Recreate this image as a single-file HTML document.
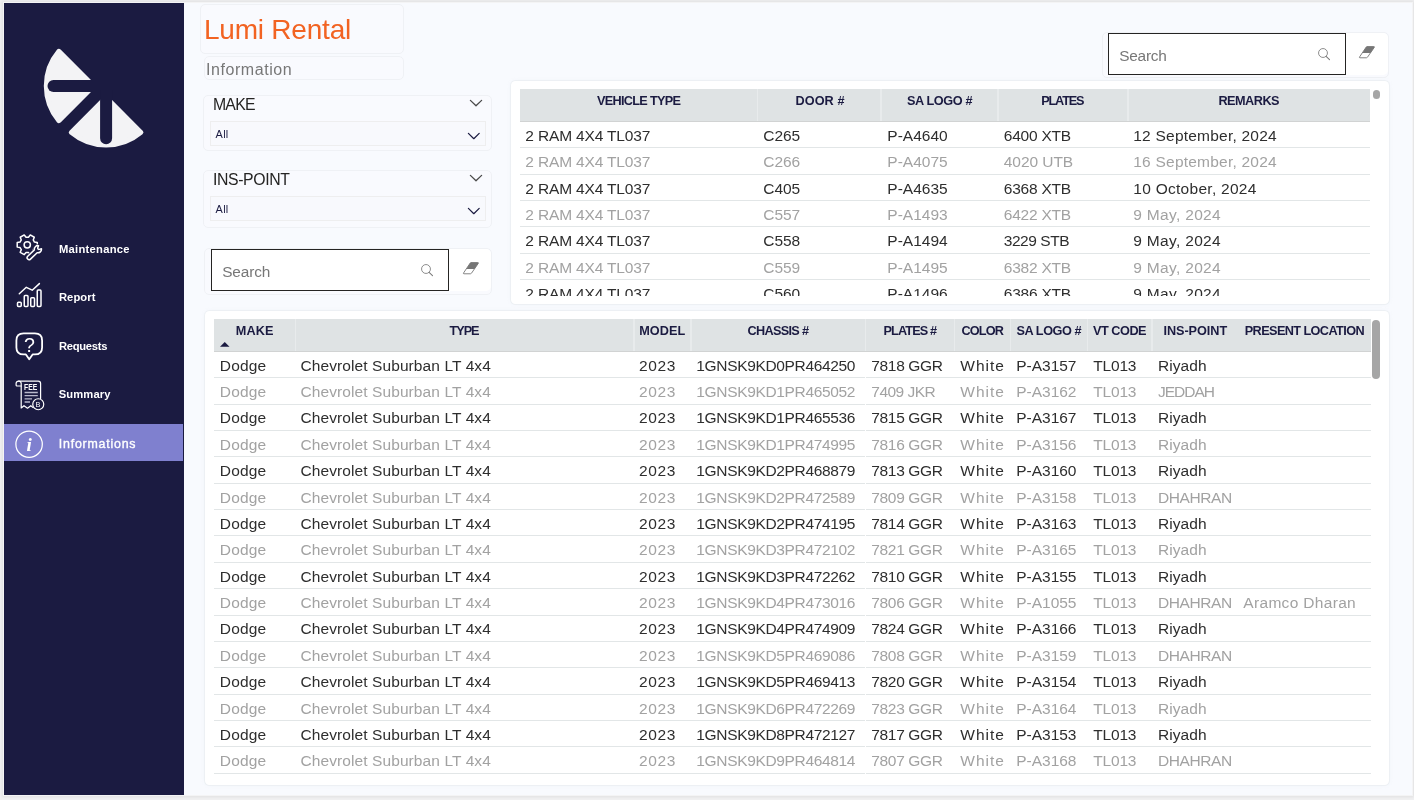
<!DOCTYPE html>
<html lang="en"><head><meta charset="utf-8"><title>Lumi Rental - Information</title>
<style>
*{box-sizing:border-box;margin:0;padding:0}
html,body{width:1414px;height:800px;overflow:hidden}
body{position:relative;background:#f0f0f1;font-family:"Liberation Sans",Arial,sans-serif;color:#252423}
h1,h2{font-weight:400;font-size:inherit}
.abs{position:absolute}
#shadow{display:none}
#canvas{position:absolute;left:4px;top:3px;width:1408px;height:792px;background:#f8fafe;overflow:hidden;will-change:transform;box-shadow:0 0 0 1px #f4f4f5,0 0 3px 2px rgba(0,0,0,.065)}
#side{position:absolute;left:0;top:0;width:180.3px;height:792px;background:#1b1b41;color:#fff}
#side svg{position:absolute;overflow:visible}
.nav{position:absolute;left:0;width:180.3px}
.nav.on{background:#7f80cf}
.card{position:absolute;border:1px solid #eff1f5;border-radius:5px;background:#f9fafe}
.wcard{position:absolute;border-radius:4.5px;background:#fff;box-shadow:0 0 0 1px rgba(228,233,236,.45),0 0 4px rgba(215,220,230,.22)}
.t{position:absolute;white-space:nowrap}
.dd{position:absolute;border:1.5px solid #eeeeef;background:#f8f9fd}
.sbox{position:absolute;border:1.3px solid #252423;background:#fff}
.hdr{position:absolute;background:#dfe3e4;border-bottom:1.5px solid #d1d3d3}
.sep{position:absolute;top:0;width:1.2px;background:#e8ebec}
.row{position:absolute;left:0;border-bottom:1.2px solid #e2e6e7}
.clip{position:absolute;overflow:hidden}
</style></head>
<body>
<div id="shadow"></div>
<div id="canvas">
<nav id="side">
<svg style="left:26px;top:32px" width="130" height="130" viewBox="30 35 130 130">
<g fill="#f3f3f5" stroke="#f3f3f5" stroke-width="5" stroke-linejoin="round">
<path d="M93.46 86 L58.85 51.39 A54 54 0 0 0 58.85 120.61 Z"/>
<path d="M106.1 97.64 L71.33 132.41 A54 54 0 0 0 140.87 132.41 Z"/>
</g>
<g fill="#1b1b41">
<path d="M53.5 80 H99 V92 H53.5 A6 6 0 0 1 53.5 80 Z"/>
<path d="M100.1 90 H112.1 V138.2 A6 6 0 0 1 100.1 138.2 Z"/>
</g>
</svg>
<div class="nav on" style="top:420.6px;height:37.4px;width:179px"></div>
<svg style="left:0;top:0" width="181" height="792" viewBox="4 3 181 792" fill="none" stroke="#fff" stroke-width="1.35" stroke-linecap="round" stroke-linejoin="round">
<path d="M34.44 242.04 L37.29 242.48 L37.29 247.12 L34.44 247.56 L33.23 249.65 L34.27 252.33 L30.26 254.65 L28.45 252.41 L26.05 252.41 L24.24 254.65 L20.23 252.33 L21.27 249.65 L20.06 247.56 L17.21 247.12 L17.21 242.48 L20.06 242.04 L21.27 239.95 L20.23 237.27 L24.24 234.95 L26.05 237.19 L28.45 237.19 L30.26 234.95 L34.27 237.27 L33.23 239.95Z" stroke-width="1.5"/>
<circle cx="27.25" cy="244.8" r="3.15" stroke-width="1.5"/>
<g transform="translate(37.9 249.2) rotate(-44)"><path fill="#1b1b41" stroke="#1b1b41" stroke-width="2.8" d="M-3 -2 H-12.2 A2 2 0 0 0 -12.2 2 H-3 A3.6 3.6 0 0 0 2.9 2.1 L0.9 1.1 A1.3 1.3 0 0 1 0.9 -1.1 L2.9 -2.1 A3.6 3.6 0 0 0 -3 -2Z"/><path fill="#1b1b41" stroke-width="1.5" d="M-3 -2 H-12.2 A2 2 0 0 0 -12.2 2 H-3 A3.6 3.6 0 0 0 2.9 2.1 L0.9 1.1 A1.3 1.3 0 0 1 0.9 -1.1 L2.9 -2.1 A3.6 3.6 0 0 0 -3 -2Z"/></g>
<g stroke-width="1.5">
<path d="M19.3 293.7 L26.3 287.3 L32.2 290.2 L39.4 283.6"/>
<rect x="17.5" y="302.25" width="3.75" height="4.25" rx="0.9"/>
<rect x="24.25" y="295.5" width="3.75" height="11" rx="0.9"/>
<rect x="30.75" y="297.75" width="3.75" height="8.75" rx="0.9"/>
<rect x="37.25" y="290" width="3.75" height="16.5" rx="0.9"/>
</g>
<path stroke-width="1.8" d="M23.6 333.4 H34.9 C40 333.4 42.1 335.6 42.1 340.4 V347.4 C42.1 352.2 40 354.4 34.9 354.4 H32.6 L29.25 359.3 L25.9 354.4 H23.6 C18.5 354.4 16.4 352.2 16.4 347.4 V340.4 C16.4 335.6 18.5 333.4 23.6 333.4Z"/>
<g stroke-width="1.2">
<path d="M21.2 386 H17.2 A1 1 0 0 1 16.1 385 V383.6 A2.55 2.55 0 0 1 18.65 381.05 H38.2 A2.4 2.4 0 0 1 40.6 383.45 V398.6"/>
<path d="M18.65 381.05 A2.55 2.55 0 0 1 21.2 383.6 V408 L24 405.7 L27.5 408.2 L30.75 405.7 L32.8 407.4"/>
<path d="M24.6 392.5 H37.8 M24.6 395.6 H37.8 M24.6 398.8 H32 M24.6 402 H30" stroke="#b9b9cc" stroke-width="1.3" stroke-linecap="butt"/>
<circle cx="38.25" cy="404.25" r="5.5" fill="#1b1b41"/>
</g>
<circle cx="29.1" cy="444.2" r="13.2" stroke-width="1.25"/>
</svg>
<span class="t" style="left:20.00px;top:331.20px;font-size:19.6px;line-height:22px;color:#fff;">?</span>
<span class="t" style="left:20.10px;top:378.60px;font-size:8.5px;line-height:10px;font-weight:700;color:#fff;transform:scaleX(.8);transform-origin:0 0;">FEE</span>
<span class="t" style="left:31.50px;top:397.00px;font-size:7.3px;line-height:9px;color:#fff;">B</span>
<span class="t" style="left:22.60px;top:430.60px;font-size:19px;line-height:21px;font-weight:700;color:#fff;font-style:italic;font-family:&quot;Liberation Serif&quot;,serif;">i</span>
<span class="t" style="left:54.90px;top:239.80px;font-size:11.2px;line-height:12px;font-weight:700;letter-spacing:0.284px;color:#fff;">Maintenance</span>
<span class="t" style="left:54.90px;top:288.00px;font-size:11.2px;line-height:12px;font-weight:700;letter-spacing:0.112px;color:#fff;">Report</span>
<span class="t" style="left:54.90px;top:337.00px;font-size:11.2px;line-height:12px;font-weight:700;letter-spacing:-0.250px;color:#fff;">Requests</span>
<span class="t" style="left:54.70px;top:384.80px;font-size:11.2px;line-height:12px;font-weight:700;letter-spacing:0.137px;color:#fff;">Summary</span>
<span class="t" style="left:54.84px;top:434.00px;font-size:12.4px;line-height:14px;letter-spacing:0.776px;color:#fff;-webkit-text-stroke:0.35px #fff;">Informations</span>
</nav>
<main>
<h1 class="card" style="left:196.00px;top:0.50px;width:204.00px;height:50.90px;"><span class="t" style="left:2.94px;top:9.50px;font-size:28px;line-height:31px;letter-spacing:-0.209px;color:#f26322;">Lumi Rental</span></h1>
<h2 class="card" style="left:199.50px;top:52.50px;width:200.50px;height:24.00px;"><span class="t" style="left:1.38px;top:4.50px;font-size:16px;line-height:17px;letter-spacing:0.580px;color:#777;">Information</span></h2>
<div class="card" style="left:199.40px;top:92.40px;width:288.90px;height:55.80px;"><span class="t" style="left:8.49px;top:-0.40px;font-size:15.8px;line-height:17px;letter-spacing:-0.715px;color:#252423;">MAKE</span></div>
<svg class="abs" style="left:465.00px;top:95.70px;overflow:visible" width="14.00" height="8.30" viewBox="-1 -1 14.00 8.30"><path d="M0.4 0.4 L6.00 5.80 L11.60 0.4" fill="none" stroke="#4a4a4a" stroke-width="1.3" stroke-linecap="round" stroke-linejoin="round"/></svg>
<div class="dd" style="left:205.60px;top:118.30px;width:276.60px;height:25.20px;"><span class="t" style="left:5.01px;top:6.10px;font-size:10.9px;line-height:12px;letter-spacing:0.289px;color:#1b1b41;">All</span></div>
<svg class="abs" style="left:462.80px;top:129.00px;overflow:visible" width="13.60" height="8.20" viewBox="-1 -1 13.60 8.20"><path d="M0.4 0.4 L5.80 5.70 L11.20 0.4" fill="none" stroke="#1b1b41" stroke-width="1.25" stroke-linecap="round" stroke-linejoin="round"/></svg>
<div class="card" style="left:199.40px;top:167.40px;width:288.90px;height:57.40px;"><span class="t" style="left:8.49px;top:-0.40px;font-size:15.8px;line-height:17px;letter-spacing:-0.355px;color:#252423;">INS-POINT</span></div>
<svg class="abs" style="left:465.00px;top:170.70px;overflow:visible" width="14.00" height="8.30" viewBox="-1 -1 14.00 8.30"><path d="M0.4 0.4 L6.00 5.80 L11.60 0.4" fill="none" stroke="#4a4a4a" stroke-width="1.3" stroke-linecap="round" stroke-linejoin="round"/></svg>
<div class="dd" style="left:205.60px;top:193.30px;width:276.60px;height:25.20px;"><span class="t" style="left:5.01px;top:6.10px;font-size:10.9px;line-height:12px;letter-spacing:0.289px;color:#1b1b41;">All</span></div>
<svg class="abs" style="left:462.80px;top:204.00px;overflow:visible" width="13.60" height="8.20" viewBox="-1 -1 13.60 8.20"><path d="M0.4 0.4 L5.80 5.70 L11.20 0.4" fill="none" stroke="#1b1b41" stroke-width="1.25" stroke-linecap="round" stroke-linejoin="round"/></svg>
<div class="card" style="left:200.00px;top:245.00px;width:288.20px;height:46.90px;"></div>
<div class="abs" style="left:209.00px;top:246.00px;width:278.30px;height:41.90px;background:#fff;border-radius:0 5px 5px 0;"></div>
<div class="sbox" style="left:207.00px;top:246.00px;width:238.20px;height:41.90px;"><span class="t" style="left:10.21px;top:12.70px;font-size:15.4px;line-height:17px;letter-spacing:-0.116px;color:#777;">Search</span></div>
<svg class="abs" style="left:416.30px;top:260.40px;overflow:visible" width="14" height="14" viewBox="-6 -6 14 14"><circle cx="0" cy="0" r="4.45" fill="none" stroke="#7a7a7a" stroke-width="0.85"/><path d="M3.1 3.3 L6.5 6.6" stroke="#7a7a7a" stroke-width="1.05" stroke-linecap="round"/></svg>
<svg class="abs" style="left:458.60px;top:259.10px;overflow:visible" width="16" height="12.4" viewBox="0 0 16 12.4"><path d="M8 0.6 H14.8 Q15.8 0.6 15.2 1.5 L8.5 11.2 Q8.1 11.8 7.4 11.8 H1 Q0 11.8 0.6 10.9 L7.2 1.1 Q7.5 0.6 8 0.6Z" fill="#fff" stroke="#767676" stroke-width="0.9" stroke-linejoin="round"/><path d="M8 0.6 H14.8 Q15.8 0.6 15.2 1.5 L11.5 6.9 H3.3 L7.2 1.1 Q7.5 0.6 8 0.6Z" fill="#767676"/></svg>
<div class="card" style="left:1097.50px;top:29.00px;width:287.00px;height:46.00px;"></div>
<div class="abs" style="left:1106.00px;top:29.90px;width:277.60px;height:41.90px;background:#fff;border-radius:0 5px 5px 0;"></div>
<div class="sbox" style="left:1104.00px;top:29.90px;width:238.30px;height:41.90px;"><span class="t" style="left:10.21px;top:12.80px;font-size:15.4px;line-height:17px;letter-spacing:-0.216px;color:#777;">Search</span></div>
<svg class="abs" style="left:1313.30px;top:44.30px;overflow:visible" width="14" height="14" viewBox="-6 -6 14 14"><circle cx="0" cy="0" r="4.45" fill="none" stroke="#7a7a7a" stroke-width="0.85"/><path d="M3.1 3.3 L6.5 6.6" stroke="#7a7a7a" stroke-width="1.05" stroke-linecap="round"/></svg>
<svg class="abs" style="left:1355.10px;top:43.20px;overflow:visible" width="16" height="12.4" viewBox="0 0 16 12.4"><path d="M8 0.6 H14.8 Q15.8 0.6 15.2 1.5 L8.5 11.2 Q8.1 11.8 7.4 11.8 H1 Q0 11.8 0.6 10.9 L7.2 1.1 Q7.5 0.6 8 0.6Z" fill="#fff" stroke="#767676" stroke-width="0.9" stroke-linejoin="round"/><path d="M8 0.6 H14.8 Q15.8 0.6 15.2 1.5 L11.5 6.9 H3.3 L7.2 1.1 Q7.5 0.6 8 0.6Z" fill="#767676"/></svg>
<section class="wcard" style="left:506.70px;top:77.70px;width:878.30px;height:223.30px">
<div class="hdr" style="left:9.30px;top:8.20px;width:850.40px;height:32.95px">
<i class="sep" style="left:236.90px;height:32.35px"></i>
<i class="sep" style="left:360.40px;height:32.35px"></i>
<i class="sep" style="left:477.40px;height:32.35px"></i>
<i class="sep" style="left:607.40px;height:32.35px"></i>
<span class="t" style="left:76.93px;top:5.10px;font-size:12.7px;line-height:14px;font-weight:700;letter-spacing:-0.682px;color:#1b1b41;">VEHICLE TYPE</span>
<span class="t" style="left:275.43px;top:5.10px;font-size:12.7px;line-height:14px;font-weight:700;letter-spacing:0.100px;color:#1b1b41;">DOOR #</span>
<span class="t" style="left:386.93px;top:5.10px;font-size:12.7px;line-height:14px;font-weight:700;letter-spacing:-0.368px;color:#1b1b41;">SA LOGO #</span>
<span class="t" style="left:521.23px;top:5.10px;font-size:12.7px;line-height:14px;font-weight:700;letter-spacing:-1.153px;color:#1b1b41;">PLATES</span>
<span class="t" style="left:698.43px;top:5.10px;font-size:12.7px;line-height:14px;font-weight:700;letter-spacing:-0.500px;color:#1b1b41;">REMARKS</span>
</div>
<div class="clip" style="left:9.30px;top:41.15px;width:850.40px;height:174.05px">
<div class="row" style="top:-0.60px;width:850.40px;height:26.960px;color:#2e2e2e">
<span class="t" style="left:5.30px;top:5.60px;font-size:15.5px;line-height:17px;letter-spacing:-0.151px">2 RAM 4X4 TL037</span>
<span class="t" style="left:243.30px;top:5.60px;font-size:15.5px;line-height:17px;letter-spacing:-0.053px">C265</span>
<span class="t" style="left:367.30px;top:5.60px;font-size:15.5px;line-height:17px;letter-spacing:0.013px">P-A4640</span>
<span class="t" style="left:483.80px;top:5.60px;font-size:15.5px;line-height:17px;letter-spacing:-0.220px">6400 XTB</span>
<span class="t" style="left:613.30px;top:5.60px;font-size:15.5px;line-height:17px;letter-spacing:0.223px">12 September, 2024</span>
</div>
<div class="row" style="top:25.76px;width:850.40px;height:26.960px;color:#a2a2a2">
<span class="t" style="left:5.30px;top:5.60px;font-size:15.5px;line-height:17px;letter-spacing:-0.151px">2 RAM 4X4 TL037</span>
<span class="t" style="left:243.30px;top:5.60px;font-size:15.5px;line-height:17px;letter-spacing:-0.053px">C266</span>
<span class="t" style="left:367.30px;top:5.60px;font-size:15.5px;line-height:17px;letter-spacing:0.013px">P-A4075</span>
<span class="t" style="left:483.80px;top:5.60px;font-size:15.5px;line-height:17px;letter-spacing:-0.056px">4020 UTB</span>
<span class="t" style="left:613.30px;top:5.60px;font-size:15.5px;line-height:17px;letter-spacing:0.223px">16 September, 2024</span>
</div>
<div class="row" style="top:52.12px;width:850.40px;height:26.960px;color:#2e2e2e">
<span class="t" style="left:5.30px;top:5.60px;font-size:15.5px;line-height:17px;letter-spacing:-0.151px">2 RAM 4X4 TL037</span>
<span class="t" style="left:243.30px;top:5.60px;font-size:15.5px;line-height:17px;letter-spacing:-0.053px">C405</span>
<span class="t" style="left:367.30px;top:5.60px;font-size:15.5px;line-height:17px;letter-spacing:0.013px">P-A4635</span>
<span class="t" style="left:483.80px;top:5.60px;font-size:15.5px;line-height:17px;letter-spacing:-0.220px">6368 XTB</span>
<span class="t" style="left:613.30px;top:5.60px;font-size:15.5px;line-height:17px;letter-spacing:0.278px">10 October, 2024</span>
</div>
<div class="row" style="top:78.48px;width:850.40px;height:26.960px;color:#a2a2a2">
<span class="t" style="left:5.30px;top:5.60px;font-size:15.5px;line-height:17px;letter-spacing:-0.151px">2 RAM 4X4 TL037</span>
<span class="t" style="left:243.30px;top:5.60px;font-size:15.5px;line-height:17px;letter-spacing:-0.053px">C557</span>
<span class="t" style="left:367.30px;top:5.60px;font-size:15.5px;line-height:17px;letter-spacing:0.013px">P-A1493</span>
<span class="t" style="left:483.80px;top:5.60px;font-size:15.5px;line-height:17px;letter-spacing:-0.220px">6422 XTB</span>
<span class="t" style="left:613.30px;top:5.60px;font-size:15.5px;line-height:17px;letter-spacing:0.324px">9 May, 2024</span>
</div>
<div class="row" style="top:104.84px;width:850.40px;height:26.960px;color:#2e2e2e">
<span class="t" style="left:5.30px;top:5.60px;font-size:15.5px;line-height:17px;letter-spacing:-0.151px">2 RAM 4X4 TL037</span>
<span class="t" style="left:243.30px;top:5.60px;font-size:15.5px;line-height:17px;letter-spacing:-0.053px">C558</span>
<span class="t" style="left:367.30px;top:5.60px;font-size:15.5px;line-height:17px;letter-spacing:0.013px">P-A1494</span>
<span class="t" style="left:483.80px;top:5.60px;font-size:15.5px;line-height:17px;letter-spacing:-0.463px">3229 STB</span>
<span class="t" style="left:613.30px;top:5.60px;font-size:15.5px;line-height:17px;letter-spacing:0.324px">9 May, 2024</span>
</div>
<div class="row" style="top:131.20px;width:850.40px;height:26.960px;color:#a2a2a2">
<span class="t" style="left:5.30px;top:5.60px;font-size:15.5px;line-height:17px;letter-spacing:-0.151px">2 RAM 4X4 TL037</span>
<span class="t" style="left:243.30px;top:5.60px;font-size:15.5px;line-height:17px;letter-spacing:-0.053px">C559</span>
<span class="t" style="left:367.30px;top:5.60px;font-size:15.5px;line-height:17px;letter-spacing:0.013px">P-A1495</span>
<span class="t" style="left:483.80px;top:5.60px;font-size:15.5px;line-height:17px;letter-spacing:-0.220px">6382 XTB</span>
<span class="t" style="left:613.30px;top:5.60px;font-size:15.5px;line-height:17px;letter-spacing:0.324px">9 May, 2024</span>
</div>
<div class="row" style="top:157.56px;width:850.40px;height:26.960px;color:#2e2e2e">
<span class="t" style="left:5.30px;top:5.60px;font-size:15.5px;line-height:17px;letter-spacing:-0.151px">2 RAM 4X4 TL037</span>
<span class="t" style="left:243.30px;top:5.60px;font-size:15.5px;line-height:17px;letter-spacing:-0.053px">C560</span>
<span class="t" style="left:367.30px;top:5.60px;font-size:15.5px;line-height:17px;letter-spacing:0.013px">P-A1496</span>
<span class="t" style="left:483.80px;top:5.60px;font-size:15.5px;line-height:17px;letter-spacing:-0.220px">6386 XTB</span>
<span class="t" style="left:613.30px;top:5.60px;font-size:15.5px;line-height:17px;letter-spacing:0.324px">9 May, 2024</span>
</div>
</div>
<div class="abs" style="left:862.00px;top:9.70px;width:7.50px;height:8.30px;border-radius:4px;background:#a6a6a6"></div>
</section>
<section class="wcard" style="left:201.00px;top:308.00px;width:1184.00px;height:474.00px">
<div class="hdr" style="left:9.00px;top:7.75px;width:1156.60px;height:33.10px">
<i class="sep" style="left:81.10px;height:32.50px"></i>
<i class="sep" style="left:419.40px;height:32.50px"></i>
<i class="sep" style="left:476.40px;height:32.50px"></i>
<i class="sep" style="left:650.65px;height:32.50px"></i>
<i class="sep" style="left:739.90px;height:32.50px"></i>
<i class="sep" style="left:795.65px;height:32.50px"></i>
<i class="sep" style="left:872.65px;height:32.50px"></i>
<i class="sep" style="left:937.40px;height:32.50px"></i>
<span class="t" style="left:21.73px;top:5.25px;font-size:12.7px;line-height:14px;font-weight:700;letter-spacing:0.162px;color:#1b1b41;">MAKE</span>
<span class="t" style="left:235.43px;top:5.25px;font-size:12.7px;line-height:14px;font-weight:700;letter-spacing:-0.998px;color:#1b1b41;">TYPE</span>
<span class="t" style="left:425.23px;top:5.25px;font-size:12.7px;line-height:14px;font-weight:700;letter-spacing:0.083px;color:#1b1b41;">MODEL</span>
<span class="t" style="left:533.43px;top:5.25px;font-size:12.7px;line-height:14px;font-weight:700;letter-spacing:-0.667px;color:#1b1b41;">CHASSIS #</span>
<span class="t" style="left:669.43px;top:5.25px;font-size:12.7px;line-height:14px;font-weight:700;letter-spacing:-0.864px;color:#1b1b41;">PLATES #</span>
<span class="t" style="left:747.43px;top:5.25px;font-size:12.7px;line-height:14px;font-weight:700;letter-spacing:-0.842px;color:#1b1b41;">COLOR</span>
<span class="t" style="left:802.43px;top:5.25px;font-size:12.7px;line-height:14px;font-weight:700;letter-spacing:-0.431px;color:#1b1b41;">SA LOGO #</span>
<span class="t" style="left:878.93px;top:5.25px;font-size:12.7px;line-height:14px;font-weight:700;letter-spacing:-0.458px;color:#1b1b41;">VT CODE</span>
<span class="t" style="left:949.43px;top:5.25px;font-size:12.7px;line-height:14px;font-weight:700;letter-spacing:-0.050px;color:#1b1b41;">INS-POINT</span>
<span class="t" style="left:1030.73px;top:5.25px;font-size:12.7px;line-height:14px;font-weight:700;letter-spacing:-0.594px;color:#1b1b41;">PRESENT LOCATION</span>
<svg class="abs" style="left:6.00px;top:23.05px" width="9.50" height="4.80" viewBox="0 0 10 5"><path d="M0 5 L5 0 L10 5Z" fill="#1b1b41"/></svg>
</div>
<div class="clip" style="left:9.00px;top:40.85px;width:1156.60px;height:428.15px">
<div class="row" style="top:-0.60px;width:1156.60px;height:26.975px;color:#2e2e2e">
<span class="t" style="left:5.80px;top:5.45px;font-size:15.5px;line-height:17px;letter-spacing:0.180px">Dodge</span>
<span class="t" style="left:86.50px;top:5.45px;font-size:15.5px;line-height:17px;letter-spacing:0.091px">Chevrolet Suburban LT 4x4</span>
<span class="t" style="left:425.10px;top:5.45px;font-size:15.5px;line-height:17px;letter-spacing:0.638px">2023</span>
<span class="t" style="left:482.30px;top:5.45px;font-size:15.5px;line-height:17px;letter-spacing:-0.336px">1GNSK9KD0PR464250</span>
<span class="t" style="left:657.30px;top:5.45px;font-size:15.5px;line-height:17px;letter-spacing:-0.343px">7818 GGR</span>
<span class="t" style="left:746.30px;top:5.45px;font-size:15.5px;line-height:17px;letter-spacing:1.019px">White</span>
<span class="t" style="left:802.30px;top:5.45px;font-size:15.5px;line-height:17px;letter-spacing:-0.021px">P-A3157</span>
<span class="t" style="left:879.30px;top:5.45px;font-size:15.5px;line-height:17px;letter-spacing:-0.189px">TL013</span>
<span class="t" style="left:943.90px;top:5.45px;font-size:15.5px;line-height:17px;letter-spacing:0.109px">Riyadh</span>
</div>
<div class="row" style="top:25.77px;width:1156.60px;height:26.975px;color:#a2a2a2">
<span class="t" style="left:5.80px;top:5.45px;font-size:15.5px;line-height:17px;letter-spacing:0.180px">Dodge</span>
<span class="t" style="left:86.50px;top:5.45px;font-size:15.5px;line-height:17px;letter-spacing:0.091px">Chevrolet Suburban LT 4x4</span>
<span class="t" style="left:425.10px;top:5.45px;font-size:15.5px;line-height:17px;letter-spacing:0.638px">2023</span>
<span class="t" style="left:482.30px;top:5.45px;font-size:15.5px;line-height:17px;letter-spacing:-0.336px">1GNSK9KD1PR465052</span>
<span class="t" style="left:657.30px;top:5.45px;font-size:15.5px;line-height:17px;letter-spacing:-0.525px">7409 JKR</span>
<span class="t" style="left:746.30px;top:5.45px;font-size:15.5px;line-height:17px;letter-spacing:1.019px">White</span>
<span class="t" style="left:802.30px;top:5.45px;font-size:15.5px;line-height:17px;letter-spacing:-0.021px">P-A3162</span>
<span class="t" style="left:879.30px;top:5.45px;font-size:15.5px;line-height:17px;letter-spacing:-0.189px">TL013</span>
<span class="t" style="left:943.90px;top:5.45px;font-size:15.5px;line-height:17px;letter-spacing:-0.983px">JEDDAH</span>
</div>
<div class="row" style="top:52.15px;width:1156.60px;height:26.975px;color:#2e2e2e">
<span class="t" style="left:5.80px;top:5.45px;font-size:15.5px;line-height:17px;letter-spacing:0.180px">Dodge</span>
<span class="t" style="left:86.50px;top:5.45px;font-size:15.5px;line-height:17px;letter-spacing:0.091px">Chevrolet Suburban LT 4x4</span>
<span class="t" style="left:425.10px;top:5.45px;font-size:15.5px;line-height:17px;letter-spacing:0.638px">2023</span>
<span class="t" style="left:482.30px;top:5.45px;font-size:15.5px;line-height:17px;letter-spacing:-0.336px">1GNSK9KD1PR465536</span>
<span class="t" style="left:657.30px;top:5.45px;font-size:15.5px;line-height:17px;letter-spacing:-0.343px">7815 GGR</span>
<span class="t" style="left:746.30px;top:5.45px;font-size:15.5px;line-height:17px;letter-spacing:1.019px">White</span>
<span class="t" style="left:802.30px;top:5.45px;font-size:15.5px;line-height:17px;letter-spacing:-0.021px">P-A3167</span>
<span class="t" style="left:879.30px;top:5.45px;font-size:15.5px;line-height:17px;letter-spacing:-0.189px">TL013</span>
<span class="t" style="left:943.90px;top:5.45px;font-size:15.5px;line-height:17px;letter-spacing:0.109px">Riyadh</span>
</div>
<div class="row" style="top:78.52px;width:1156.60px;height:26.975px;color:#a2a2a2">
<span class="t" style="left:5.80px;top:5.45px;font-size:15.5px;line-height:17px;letter-spacing:0.180px">Dodge</span>
<span class="t" style="left:86.50px;top:5.45px;font-size:15.5px;line-height:17px;letter-spacing:0.091px">Chevrolet Suburban LT 4x4</span>
<span class="t" style="left:425.10px;top:5.45px;font-size:15.5px;line-height:17px;letter-spacing:0.638px">2023</span>
<span class="t" style="left:482.30px;top:5.45px;font-size:15.5px;line-height:17px;letter-spacing:-0.336px">1GNSK9KD1PR474995</span>
<span class="t" style="left:657.30px;top:5.45px;font-size:15.5px;line-height:17px;letter-spacing:-0.343px">7816 GGR</span>
<span class="t" style="left:746.30px;top:5.45px;font-size:15.5px;line-height:17px;letter-spacing:1.019px">White</span>
<span class="t" style="left:802.30px;top:5.45px;font-size:15.5px;line-height:17px;letter-spacing:-0.021px">P-A3156</span>
<span class="t" style="left:879.30px;top:5.45px;font-size:15.5px;line-height:17px;letter-spacing:-0.189px">TL013</span>
<span class="t" style="left:943.90px;top:5.45px;font-size:15.5px;line-height:17px;letter-spacing:0.109px">Riyadh</span>
</div>
<div class="row" style="top:104.90px;width:1156.60px;height:26.975px;color:#2e2e2e">
<span class="t" style="left:5.80px;top:5.45px;font-size:15.5px;line-height:17px;letter-spacing:0.180px">Dodge</span>
<span class="t" style="left:86.50px;top:5.45px;font-size:15.5px;line-height:17px;letter-spacing:0.091px">Chevrolet Suburban LT 4x4</span>
<span class="t" style="left:425.10px;top:5.45px;font-size:15.5px;line-height:17px;letter-spacing:0.638px">2023</span>
<span class="t" style="left:482.30px;top:5.45px;font-size:15.5px;line-height:17px;letter-spacing:-0.336px">1GNSK9KD2PR468879</span>
<span class="t" style="left:657.30px;top:5.45px;font-size:15.5px;line-height:17px;letter-spacing:-0.343px">7813 GGR</span>
<span class="t" style="left:746.30px;top:5.45px;font-size:15.5px;line-height:17px;letter-spacing:1.019px">White</span>
<span class="t" style="left:802.30px;top:5.45px;font-size:15.5px;line-height:17px;letter-spacing:-0.021px">P-A3160</span>
<span class="t" style="left:879.30px;top:5.45px;font-size:15.5px;line-height:17px;letter-spacing:-0.189px">TL013</span>
<span class="t" style="left:943.90px;top:5.45px;font-size:15.5px;line-height:17px;letter-spacing:0.109px">Riyadh</span>
</div>
<div class="row" style="top:131.27px;width:1156.60px;height:26.975px;color:#a2a2a2">
<span class="t" style="left:5.80px;top:5.45px;font-size:15.5px;line-height:17px;letter-spacing:0.180px">Dodge</span>
<span class="t" style="left:86.50px;top:5.45px;font-size:15.5px;line-height:17px;letter-spacing:0.091px">Chevrolet Suburban LT 4x4</span>
<span class="t" style="left:425.10px;top:5.45px;font-size:15.5px;line-height:17px;letter-spacing:0.638px">2023</span>
<span class="t" style="left:482.30px;top:5.45px;font-size:15.5px;line-height:17px;letter-spacing:-0.336px">1GNSK9KD2PR472589</span>
<span class="t" style="left:657.30px;top:5.45px;font-size:15.5px;line-height:17px;letter-spacing:-0.343px">7809 GGR</span>
<span class="t" style="left:746.30px;top:5.45px;font-size:15.5px;line-height:17px;letter-spacing:1.019px">White</span>
<span class="t" style="left:802.30px;top:5.45px;font-size:15.5px;line-height:17px;letter-spacing:-0.021px">P-A3158</span>
<span class="t" style="left:879.30px;top:5.45px;font-size:15.5px;line-height:17px;letter-spacing:-0.189px">TL013</span>
<span class="t" style="left:943.90px;top:5.45px;font-size:15.5px;line-height:17px;letter-spacing:-0.408px">DHAHRAN</span>
</div>
<div class="row" style="top:157.65px;width:1156.60px;height:26.975px;color:#2e2e2e">
<span class="t" style="left:5.80px;top:5.45px;font-size:15.5px;line-height:17px;letter-spacing:0.180px">Dodge</span>
<span class="t" style="left:86.50px;top:5.45px;font-size:15.5px;line-height:17px;letter-spacing:0.091px">Chevrolet Suburban LT 4x4</span>
<span class="t" style="left:425.10px;top:5.45px;font-size:15.5px;line-height:17px;letter-spacing:0.638px">2023</span>
<span class="t" style="left:482.30px;top:5.45px;font-size:15.5px;line-height:17px;letter-spacing:-0.336px">1GNSK9KD2PR474195</span>
<span class="t" style="left:657.30px;top:5.45px;font-size:15.5px;line-height:17px;letter-spacing:-0.343px">7814 GGR</span>
<span class="t" style="left:746.30px;top:5.45px;font-size:15.5px;line-height:17px;letter-spacing:1.019px">White</span>
<span class="t" style="left:802.30px;top:5.45px;font-size:15.5px;line-height:17px;letter-spacing:-0.021px">P-A3163</span>
<span class="t" style="left:879.30px;top:5.45px;font-size:15.5px;line-height:17px;letter-spacing:-0.189px">TL013</span>
<span class="t" style="left:943.90px;top:5.45px;font-size:15.5px;line-height:17px;letter-spacing:0.109px">Riyadh</span>
</div>
<div class="row" style="top:184.02px;width:1156.60px;height:26.975px;color:#a2a2a2">
<span class="t" style="left:5.80px;top:5.45px;font-size:15.5px;line-height:17px;letter-spacing:0.180px">Dodge</span>
<span class="t" style="left:86.50px;top:5.45px;font-size:15.5px;line-height:17px;letter-spacing:0.091px">Chevrolet Suburban LT 4x4</span>
<span class="t" style="left:425.10px;top:5.45px;font-size:15.5px;line-height:17px;letter-spacing:0.638px">2023</span>
<span class="t" style="left:482.30px;top:5.45px;font-size:15.5px;line-height:17px;letter-spacing:-0.336px">1GNSK9KD3PR472102</span>
<span class="t" style="left:657.30px;top:5.45px;font-size:15.5px;line-height:17px;letter-spacing:-0.343px">7821 GGR</span>
<span class="t" style="left:746.30px;top:5.45px;font-size:15.5px;line-height:17px;letter-spacing:1.019px">White</span>
<span class="t" style="left:802.30px;top:5.45px;font-size:15.5px;line-height:17px;letter-spacing:-0.021px">P-A3165</span>
<span class="t" style="left:879.30px;top:5.45px;font-size:15.5px;line-height:17px;letter-spacing:-0.189px">TL013</span>
<span class="t" style="left:943.90px;top:5.45px;font-size:15.5px;line-height:17px;letter-spacing:0.109px">Riyadh</span>
</div>
<div class="row" style="top:210.40px;width:1156.60px;height:26.975px;color:#2e2e2e">
<span class="t" style="left:5.80px;top:5.45px;font-size:15.5px;line-height:17px;letter-spacing:0.180px">Dodge</span>
<span class="t" style="left:86.50px;top:5.45px;font-size:15.5px;line-height:17px;letter-spacing:0.091px">Chevrolet Suburban LT 4x4</span>
<span class="t" style="left:425.10px;top:5.45px;font-size:15.5px;line-height:17px;letter-spacing:0.638px">2023</span>
<span class="t" style="left:482.30px;top:5.45px;font-size:15.5px;line-height:17px;letter-spacing:-0.336px">1GNSK9KD3PR472262</span>
<span class="t" style="left:657.30px;top:5.45px;font-size:15.5px;line-height:17px;letter-spacing:-0.343px">7810 GGR</span>
<span class="t" style="left:746.30px;top:5.45px;font-size:15.5px;line-height:17px;letter-spacing:1.019px">White</span>
<span class="t" style="left:802.30px;top:5.45px;font-size:15.5px;line-height:17px;letter-spacing:-0.021px">P-A3155</span>
<span class="t" style="left:879.30px;top:5.45px;font-size:15.5px;line-height:17px;letter-spacing:-0.189px">TL013</span>
<span class="t" style="left:943.90px;top:5.45px;font-size:15.5px;line-height:17px;letter-spacing:0.109px">Riyadh</span>
</div>
<div class="row" style="top:236.77px;width:1156.60px;height:26.975px;color:#a2a2a2">
<span class="t" style="left:5.80px;top:5.45px;font-size:15.5px;line-height:17px;letter-spacing:0.180px">Dodge</span>
<span class="t" style="left:86.50px;top:5.45px;font-size:15.5px;line-height:17px;letter-spacing:0.091px">Chevrolet Suburban LT 4x4</span>
<span class="t" style="left:425.10px;top:5.45px;font-size:15.5px;line-height:17px;letter-spacing:0.638px">2023</span>
<span class="t" style="left:482.30px;top:5.45px;font-size:15.5px;line-height:17px;letter-spacing:-0.336px">1GNSK9KD4PR473016</span>
<span class="t" style="left:657.30px;top:5.45px;font-size:15.5px;line-height:17px;letter-spacing:-0.343px">7806 GGR</span>
<span class="t" style="left:746.30px;top:5.45px;font-size:15.5px;line-height:17px;letter-spacing:1.019px">White</span>
<span class="t" style="left:802.30px;top:5.45px;font-size:15.5px;line-height:17px;letter-spacing:-0.021px">P-A1055</span>
<span class="t" style="left:879.30px;top:5.45px;font-size:15.5px;line-height:17px;letter-spacing:-0.189px">TL013</span>
<span class="t" style="left:943.90px;top:5.45px;font-size:15.5px;line-height:17px;letter-spacing:-0.408px">DHAHRAN</span>
<span class="t" style="left:1029.30px;top:5.45px;font-size:15.5px;line-height:17px;letter-spacing:0.321px">Aramco Dharan</span>
</div>
<div class="row" style="top:263.15px;width:1156.60px;height:26.975px;color:#2e2e2e">
<span class="t" style="left:5.80px;top:5.45px;font-size:15.5px;line-height:17px;letter-spacing:0.180px">Dodge</span>
<span class="t" style="left:86.50px;top:5.45px;font-size:15.5px;line-height:17px;letter-spacing:0.091px">Chevrolet Suburban LT 4x4</span>
<span class="t" style="left:425.10px;top:5.45px;font-size:15.5px;line-height:17px;letter-spacing:0.638px">2023</span>
<span class="t" style="left:482.30px;top:5.45px;font-size:15.5px;line-height:17px;letter-spacing:-0.336px">1GNSK9KD4PR474909</span>
<span class="t" style="left:657.30px;top:5.45px;font-size:15.5px;line-height:17px;letter-spacing:-0.343px">7824 GGR</span>
<span class="t" style="left:746.30px;top:5.45px;font-size:15.5px;line-height:17px;letter-spacing:1.019px">White</span>
<span class="t" style="left:802.30px;top:5.45px;font-size:15.5px;line-height:17px;letter-spacing:-0.021px">P-A3166</span>
<span class="t" style="left:879.30px;top:5.45px;font-size:15.5px;line-height:17px;letter-spacing:-0.189px">TL013</span>
<span class="t" style="left:943.90px;top:5.45px;font-size:15.5px;line-height:17px;letter-spacing:0.109px">Riyadh</span>
</div>
<div class="row" style="top:289.52px;width:1156.60px;height:26.975px;color:#a2a2a2">
<span class="t" style="left:5.80px;top:5.45px;font-size:15.5px;line-height:17px;letter-spacing:0.180px">Dodge</span>
<span class="t" style="left:86.50px;top:5.45px;font-size:15.5px;line-height:17px;letter-spacing:0.091px">Chevrolet Suburban LT 4x4</span>
<span class="t" style="left:425.10px;top:5.45px;font-size:15.5px;line-height:17px;letter-spacing:0.638px">2023</span>
<span class="t" style="left:482.30px;top:5.45px;font-size:15.5px;line-height:17px;letter-spacing:-0.336px">1GNSK9KD5PR469086</span>
<span class="t" style="left:657.30px;top:5.45px;font-size:15.5px;line-height:17px;letter-spacing:-0.343px">7808 GGR</span>
<span class="t" style="left:746.30px;top:5.45px;font-size:15.5px;line-height:17px;letter-spacing:1.019px">White</span>
<span class="t" style="left:802.30px;top:5.45px;font-size:15.5px;line-height:17px;letter-spacing:-0.021px">P-A3159</span>
<span class="t" style="left:879.30px;top:5.45px;font-size:15.5px;line-height:17px;letter-spacing:-0.189px">TL013</span>
<span class="t" style="left:943.90px;top:5.45px;font-size:15.5px;line-height:17px;letter-spacing:-0.408px">DHAHRAN</span>
</div>
<div class="row" style="top:315.90px;width:1156.60px;height:26.975px;color:#2e2e2e">
<span class="t" style="left:5.80px;top:5.45px;font-size:15.5px;line-height:17px;letter-spacing:0.180px">Dodge</span>
<span class="t" style="left:86.50px;top:5.45px;font-size:15.5px;line-height:17px;letter-spacing:0.091px">Chevrolet Suburban LT 4x4</span>
<span class="t" style="left:425.10px;top:5.45px;font-size:15.5px;line-height:17px;letter-spacing:0.638px">2023</span>
<span class="t" style="left:482.30px;top:5.45px;font-size:15.5px;line-height:17px;letter-spacing:-0.336px">1GNSK9KD5PR469413</span>
<span class="t" style="left:657.30px;top:5.45px;font-size:15.5px;line-height:17px;letter-spacing:-0.343px">7820 GGR</span>
<span class="t" style="left:746.30px;top:5.45px;font-size:15.5px;line-height:17px;letter-spacing:1.019px">White</span>
<span class="t" style="left:802.30px;top:5.45px;font-size:15.5px;line-height:17px;letter-spacing:-0.021px">P-A3154</span>
<span class="t" style="left:879.30px;top:5.45px;font-size:15.5px;line-height:17px;letter-spacing:-0.189px">TL013</span>
<span class="t" style="left:943.90px;top:5.45px;font-size:15.5px;line-height:17px;letter-spacing:0.109px">Riyadh</span>
</div>
<div class="row" style="top:342.27px;width:1156.60px;height:26.975px;color:#a2a2a2">
<span class="t" style="left:5.80px;top:5.45px;font-size:15.5px;line-height:17px;letter-spacing:0.180px">Dodge</span>
<span class="t" style="left:86.50px;top:5.45px;font-size:15.5px;line-height:17px;letter-spacing:0.091px">Chevrolet Suburban LT 4x4</span>
<span class="t" style="left:425.10px;top:5.45px;font-size:15.5px;line-height:17px;letter-spacing:0.638px">2023</span>
<span class="t" style="left:482.30px;top:5.45px;font-size:15.5px;line-height:17px;letter-spacing:-0.336px">1GNSK9KD6PR472269</span>
<span class="t" style="left:657.30px;top:5.45px;font-size:15.5px;line-height:17px;letter-spacing:-0.343px">7823 GGR</span>
<span class="t" style="left:746.30px;top:5.45px;font-size:15.5px;line-height:17px;letter-spacing:1.019px">White</span>
<span class="t" style="left:802.30px;top:5.45px;font-size:15.5px;line-height:17px;letter-spacing:-0.021px">P-A3164</span>
<span class="t" style="left:879.30px;top:5.45px;font-size:15.5px;line-height:17px;letter-spacing:-0.189px">TL013</span>
<span class="t" style="left:943.90px;top:5.45px;font-size:15.5px;line-height:17px;letter-spacing:0.109px">Riyadh</span>
</div>
<div class="row" style="top:368.65px;width:1156.60px;height:26.975px;color:#2e2e2e">
<span class="t" style="left:5.80px;top:5.45px;font-size:15.5px;line-height:17px;letter-spacing:0.180px">Dodge</span>
<span class="t" style="left:86.50px;top:5.45px;font-size:15.5px;line-height:17px;letter-spacing:0.091px">Chevrolet Suburban LT 4x4</span>
<span class="t" style="left:425.10px;top:5.45px;font-size:15.5px;line-height:17px;letter-spacing:0.638px">2023</span>
<span class="t" style="left:482.30px;top:5.45px;font-size:15.5px;line-height:17px;letter-spacing:-0.336px">1GNSK9KD8PR472127</span>
<span class="t" style="left:657.30px;top:5.45px;font-size:15.5px;line-height:17px;letter-spacing:-0.343px">7817 GGR</span>
<span class="t" style="left:746.30px;top:5.45px;font-size:15.5px;line-height:17px;letter-spacing:1.019px">White</span>
<span class="t" style="left:802.30px;top:5.45px;font-size:15.5px;line-height:17px;letter-spacing:-0.021px">P-A3153</span>
<span class="t" style="left:879.30px;top:5.45px;font-size:15.5px;line-height:17px;letter-spacing:-0.189px">TL013</span>
<span class="t" style="left:943.90px;top:5.45px;font-size:15.5px;line-height:17px;letter-spacing:0.109px">Riyadh</span>
</div>
<div class="row" style="top:395.02px;width:1156.60px;height:26.975px;color:#a2a2a2">
<span class="t" style="left:5.80px;top:5.45px;font-size:15.5px;line-height:17px;letter-spacing:0.180px">Dodge</span>
<span class="t" style="left:86.50px;top:5.45px;font-size:15.5px;line-height:17px;letter-spacing:0.091px">Chevrolet Suburban LT 4x4</span>
<span class="t" style="left:425.10px;top:5.45px;font-size:15.5px;line-height:17px;letter-spacing:0.638px">2023</span>
<span class="t" style="left:482.30px;top:5.45px;font-size:15.5px;line-height:17px;letter-spacing:-0.336px">1GNSK9KD9PR464814</span>
<span class="t" style="left:657.30px;top:5.45px;font-size:15.5px;line-height:17px;letter-spacing:-0.343px">7807 GGR</span>
<span class="t" style="left:746.30px;top:5.45px;font-size:15.5px;line-height:17px;letter-spacing:1.019px">White</span>
<span class="t" style="left:802.30px;top:5.45px;font-size:15.5px;line-height:17px;letter-spacing:-0.021px">P-A3168</span>
<span class="t" style="left:879.30px;top:5.45px;font-size:15.5px;line-height:17px;letter-spacing:-0.189px">TL013</span>
<span class="t" style="left:943.90px;top:5.45px;font-size:15.5px;line-height:17px;letter-spacing:-0.408px">DHAHRAN</span>
</div>
<i class="abs" style="left:650.65px;top:0;width:1.2px;height:100%;background:#fff"></i>
</div>
<div class="abs" style="left:1167.00px;top:9.00px;width:7.60px;height:59.00px;border-radius:4px;background:#a6a6a6"></div>
</section>
</main>
</div>
</body></html>
